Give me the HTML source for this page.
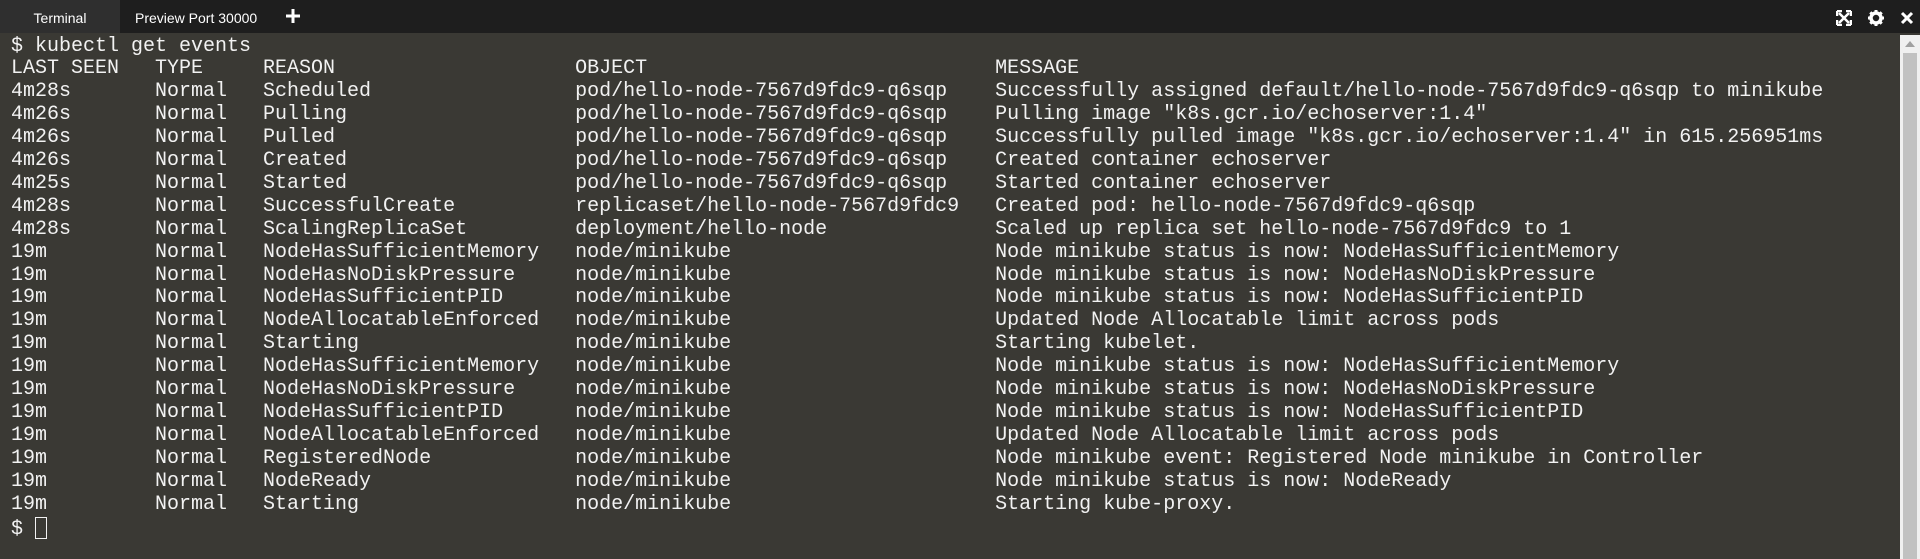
<!DOCTYPE html>
<html><head><style>
html,body{margin:0;padding:0;width:1920px;height:559px;overflow:hidden;background:#3a3934;}
.bar{position:absolute;left:0;top:0;width:1920px;height:33px;background:#1e1e1e;}
.tab{position:absolute;top:0;height:33px;line-height:36px;font-family:"Liberation Sans",sans-serif;font-size:14px;color:#fff;}
.t1{left:0;width:120px;background:#2f2f2f;text-align:center;}
.t2{left:135px;}
.plus{position:absolute;left:285px;top:8px;width:16px;height:16px;}
.term{position:absolute;left:11px;top:35.5px;font-family:"Liberation Mono",monospace;font-size:20px;line-height:22.9px;color:#f2f2f2;white-space:pre;margin:0;}
.sb{position:absolute;left:1900px;top:35px;width:20px;height:524px;background:#f0f0f0;}
.thumb{position:absolute;left:3px;top:18px;width:14px;height:506px;background:#c1c1c1;}
.cur{display:inline-block;width:12px;height:22px;border:1px solid #f2f2f2;vertical-align:-5px;box-sizing:border-box;}
</style></head><body>
<div class="bar"></div>
<div class="tab t1">Terminal</div>
<div class="tab t2">Preview Port 30000</div>
<svg class="plus" viewBox="0 0 16 16"><path d="M8 1v14M1 8h14" stroke="#fff" stroke-width="3"/></svg>
<svg style="position:absolute;left:1836px;top:10px" width="16" height="16" viewBox="0 0 16 16" fill="none" stroke="#fff" stroke-width="2.5"><path d="M3 3l10 10M13 3L3 13"/><path d="M1 1h5M1 1v5M15 1h-5M15 1v5M1 15h5M1 15v-5M15 15h-5M15 15v-5" stroke-width="2.5"/></svg>
<svg style="position:absolute;left:1868px;top:10px" width="16" height="16" viewBox="0 0 16 16"><circle cx="8" cy="8" r="5" fill="none" stroke="#fff" stroke-width="3.5"/><path d="M8 0v16M0 8h16M2.3 2.3l11.4 11.4M13.7 2.3L2.3 13.7" stroke="#fff" stroke-width="3" stroke-dasharray="3 10 3 0"/></svg>
<svg style="position:absolute;left:1900px;top:11px" width="14" height="14" viewBox="0 0 14 14"><path d="M2 2l10 10M12 2L2 12" stroke="#fff" stroke-width="3"/></svg>
<div class="sb"><svg style="position:absolute;left:5px;top:6px" width="10" height="6"><path d="M0 6L5 0L10 6Z" fill="#a0a0a0"/></svg><div class="thumb"></div></div>
<pre class="term">$ kubectl get events
LAST SEEN   TYPE     REASON                    OBJECT                             MESSAGE
4m28s       Normal   Scheduled                 pod/hello-node-7567d9fdc9-q6sqp    Successfully assigned default/hello-node-7567d9fdc9-q6sqp to minikube
4m26s       Normal   Pulling                   pod/hello-node-7567d9fdc9-q6sqp    Pulling image "k8s.gcr.io/echoserver:1.4"
4m26s       Normal   Pulled                    pod/hello-node-7567d9fdc9-q6sqp    Successfully pulled image "k8s.gcr.io/echoserver:1.4" in 615.256951ms
4m26s       Normal   Created                   pod/hello-node-7567d9fdc9-q6sqp    Created container echoserver
4m25s       Normal   Started                   pod/hello-node-7567d9fdc9-q6sqp    Started container echoserver
4m28s       Normal   SuccessfulCreate          replicaset/hello-node-7567d9fdc9   Created pod: hello-node-7567d9fdc9-q6sqp
4m28s       Normal   ScalingReplicaSet         deployment/hello-node              Scaled up replica set hello-node-7567d9fdc9 to 1
19m         Normal   NodeHasSufficientMemory   node/minikube                      Node minikube status is now: NodeHasSufficientMemory
19m         Normal   NodeHasNoDiskPressure     node/minikube                      Node minikube status is now: NodeHasNoDiskPressure
19m         Normal   NodeHasSufficientPID      node/minikube                      Node minikube status is now: NodeHasSufficientPID
19m         Normal   NodeAllocatableEnforced   node/minikube                      Updated Node Allocatable limit across pods
19m         Normal   Starting                  node/minikube                      Starting kubelet.
19m         Normal   NodeHasSufficientMemory   node/minikube                      Node minikube status is now: NodeHasSufficientMemory
19m         Normal   NodeHasNoDiskPressure     node/minikube                      Node minikube status is now: NodeHasNoDiskPressure
19m         Normal   NodeHasSufficientPID      node/minikube                      Node minikube status is now: NodeHasSufficientPID
19m         Normal   NodeAllocatableEnforced   node/minikube                      Updated Node Allocatable limit across pods
19m         Normal   RegisteredNode            node/minikube                      Node minikube event: Registered Node minikube in Controller
19m         Normal   NodeReady                 node/minikube                      Node minikube status is now: NodeReady
19m         Normal   Starting                  node/minikube                      Starting kube-proxy.
$ <span class="cur"></span></pre>
</body></html>
